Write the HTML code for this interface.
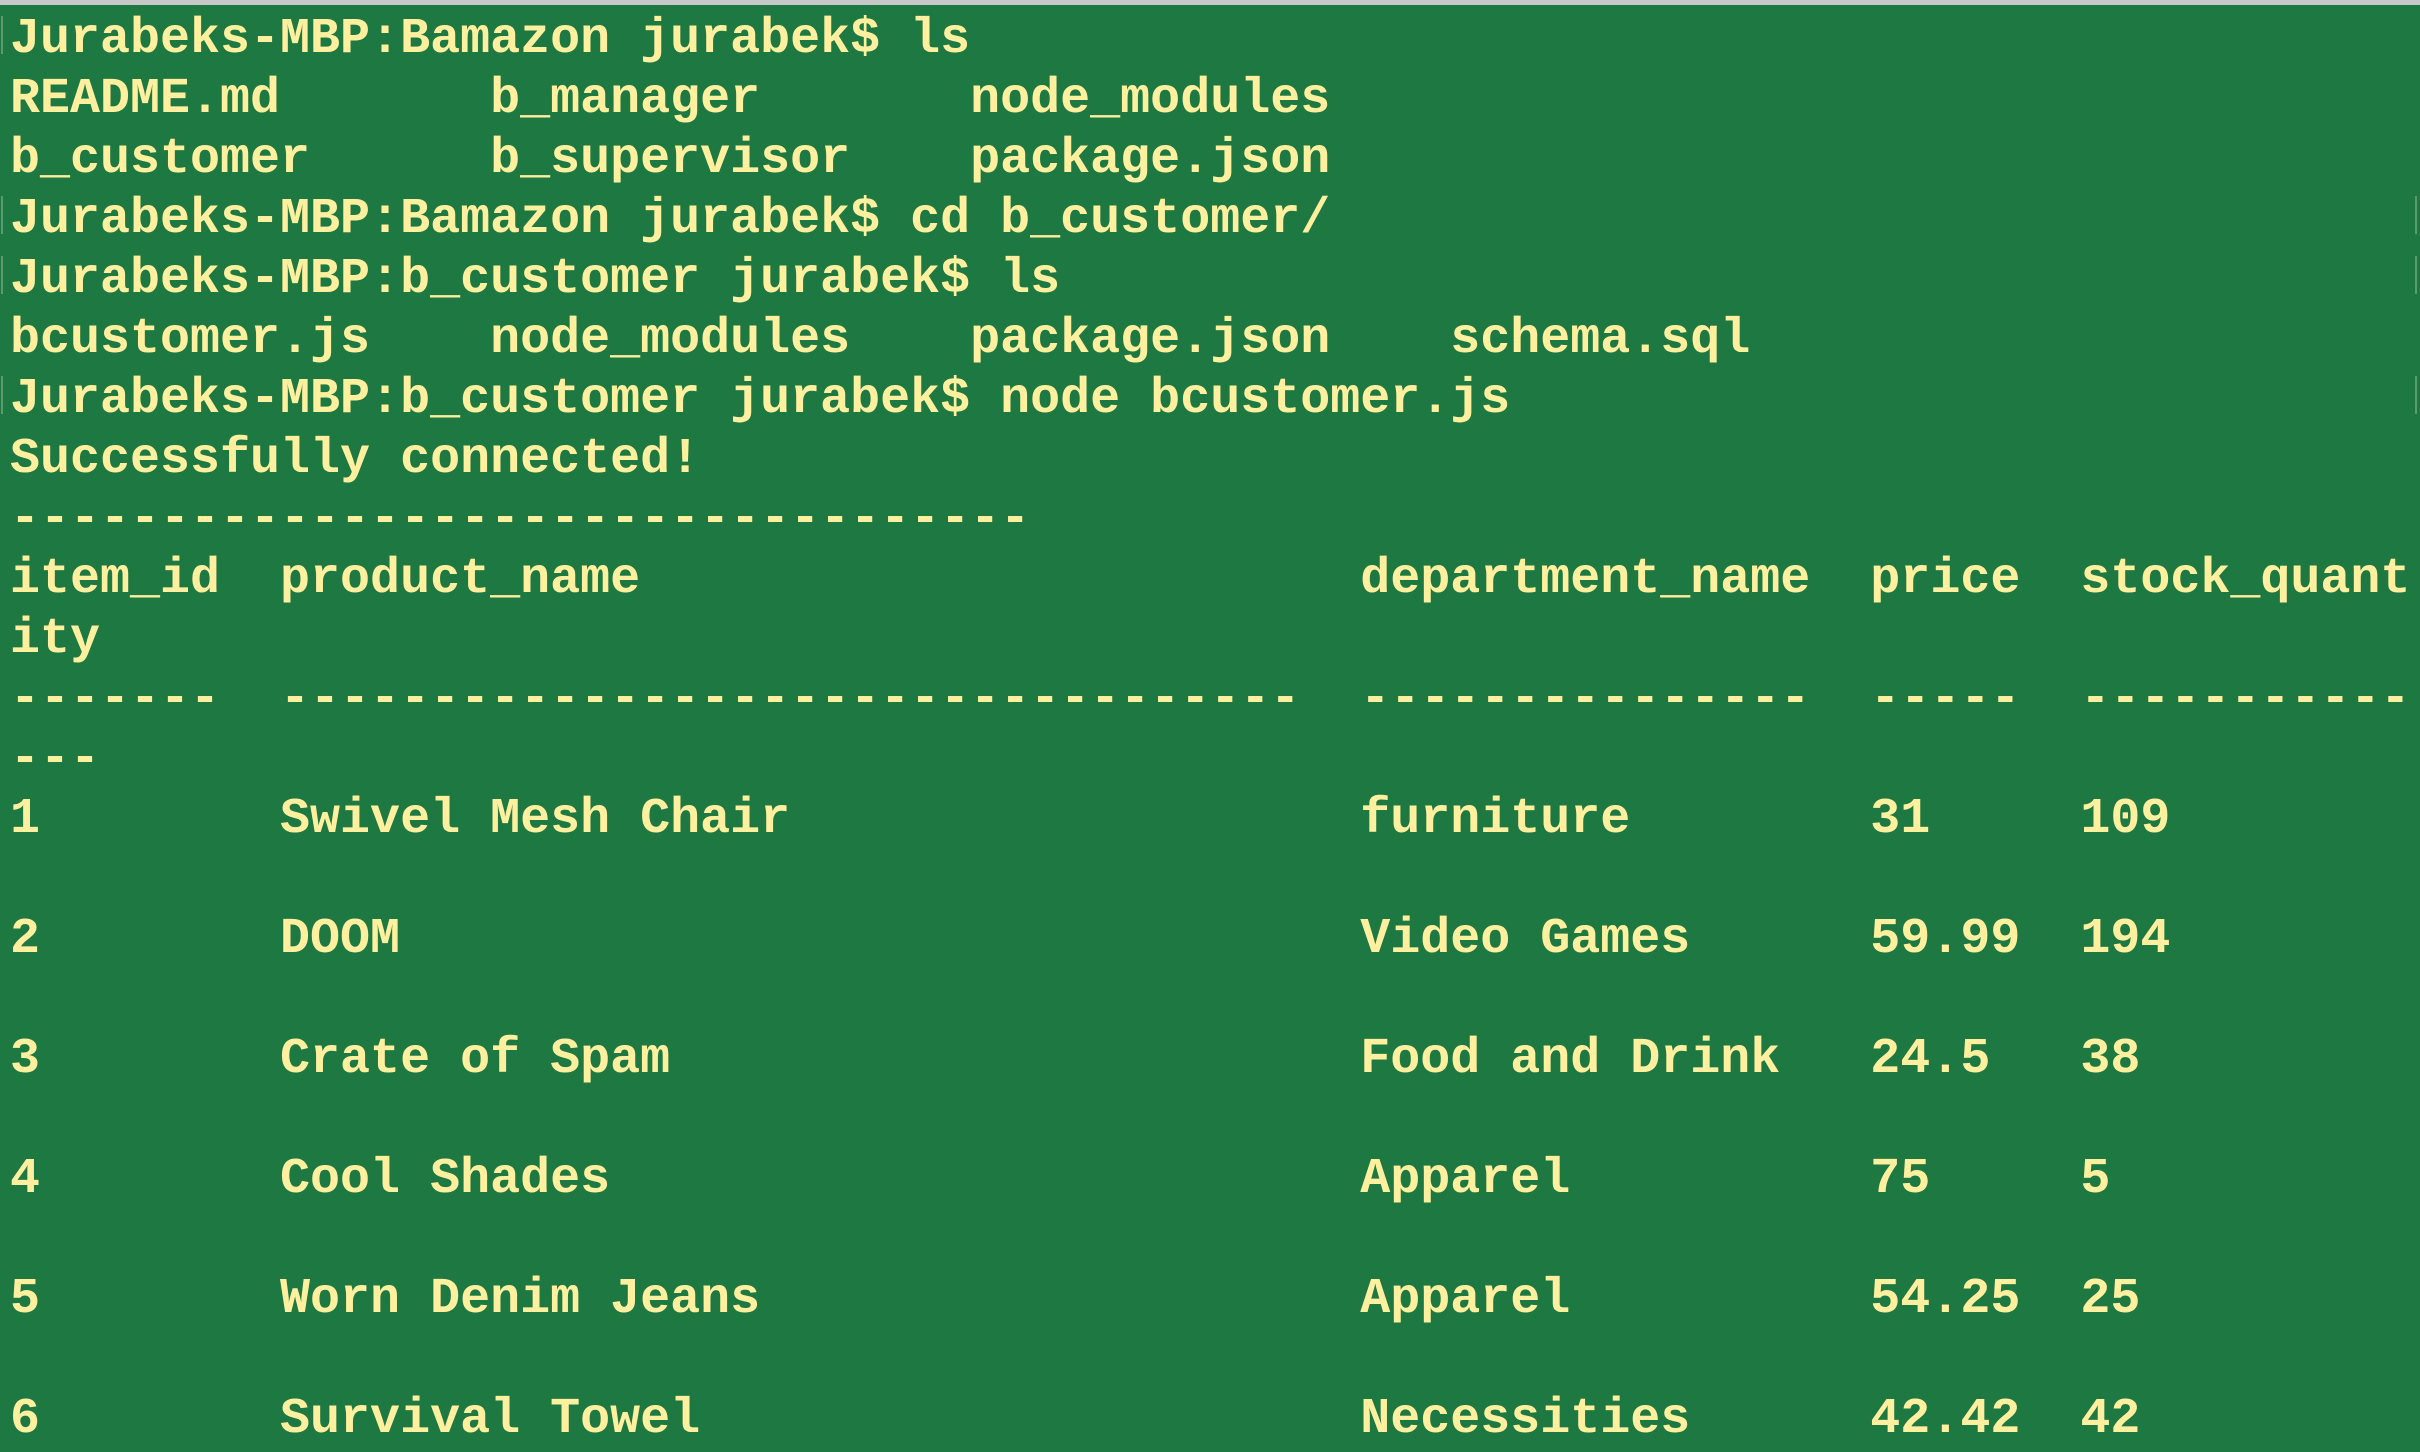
<!DOCTYPE html>
<html><head><meta charset="utf-8"><style>
html,body{margin:0;padding:0;width:2420px;height:1452px;overflow:hidden;background:#1e7842;}
.top{position:absolute;left:0;top:0;width:2420px;height:5px;background:#c8c8c8;}
pre{position:absolute;left:10px;top:10px;margin:0;font-family:"Liberation Mono",monospace;font-weight:bold;font-size:50px;line-height:60px;color:#fff0a0;white-space:pre;}
.br{position:absolute;left:1px;width:3px;height:38px;border-left:2px solid #5a9a6e;}
.rb{position:absolute;right:3px;width:3px;height:38px;border-right:2px solid #5a9a6e;}
</style></head><body>
<div class="top"></div>
<div class="br" style="top:16px"></div>
<div class="br" style="top:196px"></div>
<div class="br" style="top:256px"></div>
<div class="br" style="top:376px"></div>
<div class="rb" style="top:196px"></div>
<div class="rb" style="top:256px"></div>
<div class="rb" style="top:376px"></div>
<pre>Jurabeks-MBP:Bamazon jurabek$ ls
README.md       b_manager       node_modules
b_customer      b_supervisor    package.json
Jurabeks-MBP:Bamazon jurabek$ cd b_customer/
Jurabeks-MBP:b_customer jurabek$ ls
bcustomer.js    node_modules    package.json    schema.sql
Jurabeks-MBP:b_customer jurabek$ node bcustomer.js
Successfully connected!
----------------------------------
item_id  product_name                        department_name  price  stock_quant
ity
-------  ----------------------------------  ---------------  -----  -----------
---
1        Swivel Mesh Chair                   furniture        31     109

2        DOOM                                Video Games      59.99  194

3        Crate of Spam                       Food and Drink   24.5   38

4        Cool Shades                         Apparel          75     5

5        Worn Denim Jeans                    Apparel          54.25  25

6        Survival Towel                      Necessities      42.42  42</pre>
</body></html>
